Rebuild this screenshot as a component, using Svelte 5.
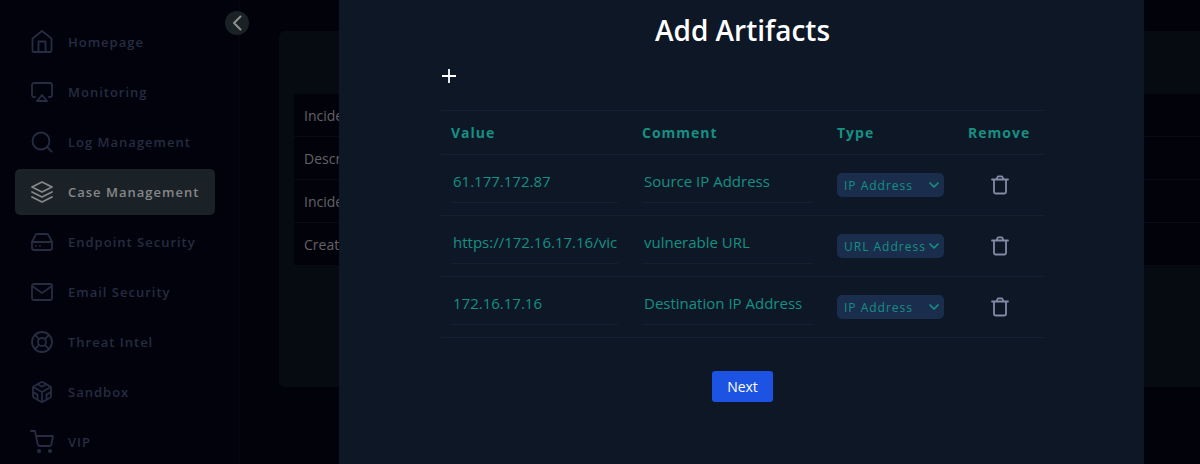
<script>
  const nav = [
    { label: 'Homepage', icon: 'home' },
    { label: 'Monitoring', icon: 'airplay' },
    { label: 'Log Management', icon: 'search' },
    { label: 'Case Management', icon: 'layers', active: true },
    { label: 'Endpoint Security', icon: 'drive' },
    { label: 'Email Security', icon: 'mail' },
    { label: 'Threat Intel', icon: 'buoy' },
    { label: 'Sandbox', icon: 'box' },
    { label: 'VIP', icon: 'cart' }
  ];

  const details = ['Incident Name', 'Description', 'Incident Type', 'Created Date'];
  const types = ['IP Address', 'URL Address', 'E-mail Sender', 'MD5 Hash'];

  let artifacts = $state([
    { id: 1, value: '61.177.172.87', comment: 'Source IP Address', type: 'IP Address' },
    { id: 2, value: 'https://172.16.17.16/vicidial', comment: 'vulnerable URL', type: 'URL Address' },
    { id: 3, value: '172.16.17.16', comment: 'Destination IP Address', type: 'IP Address' }
  ]);
  let nextId = 4;

  function add() {
    artifacts.push({ id: nextId++, value: '', comment: '', type: 'IP Address' });
  }
  function remove(id) {
    artifacts = artifacts.filter((a) => a.id !== id);
  }
</script>

{#snippet glyph(name)}
  <svg class="glyph" viewBox="0 0 24 24" aria-hidden="true">
    {#if name === 'home'}
      <path d="M2.5 8.5L12 1l9.500 7.500V20.500a1.500 1.500 0 0 1-1.500 1.500H4a1.500 1.500 0 0 1-1.500-1.500z" />
      <path d="M8.500 22V11.500h7V22" />
    {:else if name === 'airplay'}
      <path d="M5 17H4a2 2 0 0 1-2-2V5a2 2 0 0 1 2-2h16a2 2 0 0 1 2 2v10a2 2 0 0 1-2 2h-1" />
      <path d="M12 15l5 6H7z" />
    {:else if name === 'search'}
      <circle cx="11" cy="11" r="8.5" />
      <path d="M21.5 21.5l-4.5-4.5" />
    {:else if name === 'layers'}
      <path d="M12 2L2 7l10 5 10-5z" />
      <path d="M2 17l10 5 10-5" />
      <path d="M2 12l10 5 10-5" />
    {:else if name === 'drive'}
      <path d="M22 12H2" />
      <path d="M5.45 5.11L2 12v6a2 2 0 0 0 2 2h16a2 2 0 0 0 2-2v-6l-3.45-6.89A2 2 0 0 0 16.76 4H7.24a2 2 0 0 0-1.79 1.11z" />
      <path d="M6 16h.01M10 16h.01" />
    {:else if name === 'mail'}
      <path d="M4 4h16a2 2 0 0 1 2 2v12a2 2 0 0 1-2 2H4a2 2 0 0 1-2-2V6a2 2 0 0 1 2-2z" />
      <path d="M22 6l-10 7L2 6" />
    {:else if name === 'buoy'}
      <circle cx="12" cy="12" r="10" />
      <circle cx="12" cy="12" r="4" />
      <path d="M4.93 4.93l4.24 4.24M14.83 14.83l4.24 4.24M14.83 9.17l4.24-4.24M4.93 19.07l4.24-4.24" />
    {:else if name === 'box'}
      <path d="M21 16V8a2 2 0 0 0-1-1.73l-7-4a2 2 0 0 0-2 0l-7 4A2 2 0 0 0 3 8v8a2 2 0 0 0 1 1.73l7 4a2 2 0 0 0 2 0l7-4A2 2 0 0 0 21 16z" />
      <path d="M7.5 4.21l4.5 2.6 4.5-2.6M7.5 19.79V14.6L3 12M21 12l-4.5 2.6v5.19M3.27 6.96L12 12.01l8.73-5.05M12 22.08V12" />
    {:else if name === 'cart'}
      <circle class="solid" cx="9" cy="21" r="1.2" />
      <circle class="solid" cx="20" cy="21" r="1.2" />
      <path d="M1 1h4l2.68 13.39a2 2 0 0 0 2 1.61h9.72a2 2 0 0 0 2-1.61L23 6H6" />
    {/if}
  </svg>
{/snippet}

<div class="page">
  <aside class="sidebar">
    <nav>
      {#each nav as item}
        <a href="#{item.icon}" class:active={item.active}>
          {@render glyph(item.icon)}
          <span>{item.label}</span>
        </a>
      {/each}
    </nav>
    <button class="collapse" type="button" aria-label="Collapse menu">
      <svg viewBox="0 0 24 24" aria-hidden="true"><path d="M15.500 5.500L9 12l6.500 6.500" /></svg>
    </button>
  </aside>

  <main>
    <section class="card">
      <table class="details">
        <tbody>
          {#each details as label}
            <tr><th scope="row">{label}</th><td></td></tr>
          {/each}
        </tbody>
      </table>
    </section>
  </main>

  <div class="modal" role="dialog" aria-labelledby="modal-title">
    <h1 id="modal-title">Add Artifacts</h1>
    <button class="add" type="button" aria-label="Add artifact" onclick={add}>
      <svg viewBox="0 0 16 16" aria-hidden="true"><path d="M8 1v14M1 8h14" /></svg>
    </button>

    <table class="artifacts">
      <colgroup>
        <col class="c-value" /><col /><col class="c-type" /><col class="c-remove" />
      </colgroup>
      <thead>
        <tr><th>Value</th><th>Comment</th><th>Type</th><th>Remove</th></tr>
      </thead>
      <tbody>
        {#each artifacts as row (row.id)}
          <tr>
            <td><input type="text" aria-label="Value" bind:value={row.value} /></td>
            <td><input type="text" aria-label="Comment" bind:value={row.comment} /></td>
            <td>
              <div class="select">
                <select aria-label="Type" bind:value={row.type}>
                  {#each types as t}<option>{t}</option>{/each}
                </select>
                <svg viewBox="0 0 10 8" aria-hidden="true"><path d="M1 2l4 4 4-4" /></svg>
              </div>
            </td>
            <td>
              <button class="trash" type="button" aria-label="Remove" onclick={() => remove(row.id)}>
                <svg viewBox="0 0 18 20" aria-hidden="true">
                  <path d="M1 4.500h16M3 4.500v12.500a1.500 1.500 0 0 0 1.500 1.500h9a1.500 1.500 0 0 0 1.500-1.500v-12.500M5.500 4.500l1-2.500a1 1 0 0 1 1-.7h3a1 1 0 0 1 1 .7l1 2.500" />
                </svg>
              </button>
            </td>
          </tr>
        {/each}
      </tbody>
    </table>

    <button class="next" type="button">Next</button>
  </div>
</div>

<style>
  :global(body) {
    margin: 0;
    background: #02020b;
    overflow: hidden;
  }
  .page {
    display: flex;
    min-height: 100vh;
    position: relative;
    font-family: 'Open Sans', 'Noto Sans', sans-serif;
    font-size: 15px;
  }
  button, input, select {
    font: inherit;
    margin: 0;
    padding: 0;
    border: 0;
    background: none;
    border-radius: 0;
  }
  svg {
    display: block;
    fill: none;
    stroke: currentColor;
    stroke-linecap: round;
    stroke-linejoin: round;
  }

  .sidebar {
    position: relative;
    box-sizing: border-box;
    flex: 0 0 240px;
    padding: 19px 24px 0 15px;
    border-right: 1px solid #05070f;
    background: #01020b;
  }
  nav {
    display: flex;
    flex-direction: column;
    gap: 4px;
  }
  nav a {
    display: flex;
    align-items: center;
    gap: 14px;
    height: 46px;
    padding-left: 15px;
    border-radius: 5px;
    color: #262c42;
    font-size: 13px;
    font-weight: 600;
    letter-spacing: 1px;
    text-decoration: none;
    white-space: nowrap;
  }
  nav a.active {
    background: #1a2228;
    color: #868788;
  }
  .glyph {
    flex: none;
    width: 24px;
    height: 24px;
    stroke-width: 1.8;
  }
  .glyph .solid {
    fill: currentColor;
  }
  .collapse {
    position: absolute;
    top: 11px;
    right: -10px;
    width: 24px;
    height: 24px;
    border-radius: 50%;
    background: #1a2226;
    color: #8d8f90;
  }
  .collapse svg {
    width: 24px;
    height: 24px;
    stroke-width: 2;
  }

  main {
    flex: 1;
    padding: 31px 0 77px 39px;
  }
  .card {
    box-sizing: border-box;
    min-height: 356px;
    padding: 63px 0 0 15px;
    border-radius: 6px 0 0 6px;
    background: #060b12;
  }
  .details {
    width: 100%;
    border-collapse: collapse;
    background: #02020b;
  }
  .details tr {
    border-bottom: 1px solid #090b14;
  }
  .details th {
    height: 42px;
    padding: 0 0 0 10px;
    color: #626265;
    font-size: 14px;
    font-weight: 400;
    text-align: left;
    white-space: nowrap;
  }

  .modal {
    position: absolute;
    inset: 0 56px 0 339px;
    display: flex;
    flex-direction: column;
    align-items: flex-start;
    padding: 10px 100px 0 102px;
    background: #0d1725;
  }
  h1 {
    align-self: center;
    margin: 0;
    color: #fff;
    font-size: 28px;
    line-height: 40px;
    font-weight: 600;
  }
  .add {
    margin-top: 18px;
    color: #fff;
  }
  .add svg {
    width: 16px;
    height: 16px;
    stroke-width: 1.8;
    stroke-linecap: butt;
  }
  .artifacts {
    width: 100%;
    margin-top: 26px;
    table-layout: fixed;
    border-collapse: collapse;
    border-top: 1px solid #142031;
    color: #169083;
  }
  .artifacts tr {
    border-bottom: 1px solid #142031;
  }
  .c-value { width: 191px; }
  .c-type { width: 131px; }
  .c-remove { width: 86px; }
  .artifacts th {
    height: 43px;
    padding: 0 0 0 10px;
    font-size: 14px;
    font-weight: 700;
    letter-spacing: 1px;
    text-align: left;
  }
  .artifacts td {
    height: 60px;
    padding: 0 14px 0 10px;
  }
  input {
    display: block;
    box-sizing: border-box;
    width: 100%;
    height: 36px;
    padding: 0 0 8px 2px;
    border-bottom: 1px solid #142031;
    color: inherit;
  }
  .select {
    position: relative;
  }
  select {
    display: block;
    box-sizing: border-box;
    width: 100%;
    height: 24px;
    padding: 0 7px;
    appearance: none;
    border-radius: 5px;
    background: #1a2d4d;
    color: inherit;
    font-size: 12px;
    letter-spacing: 1px;
  }
  .select svg {
    position: absolute;
    right: 5px;
    top: 8px;
    width: 10px;
    height: 8px;
    stroke-width: 1.7;
    pointer-events: none;
  }
  .trash {
    display: block;
    margin-left: 23px;
    color: #858ba6;
  }
  .trash svg {
    width: 18px;
    height: 20px;
    stroke-width: 1.8;
  }
  .next {
    align-self: center;
    margin-top: 33px;
    padding: 0 15px;
    border-radius: 3px;
    background: #1c53e2;
    color: #fff;
    font-size: 14px;
    font-weight: 500;
    line-height: 31px;
  }
</style>
